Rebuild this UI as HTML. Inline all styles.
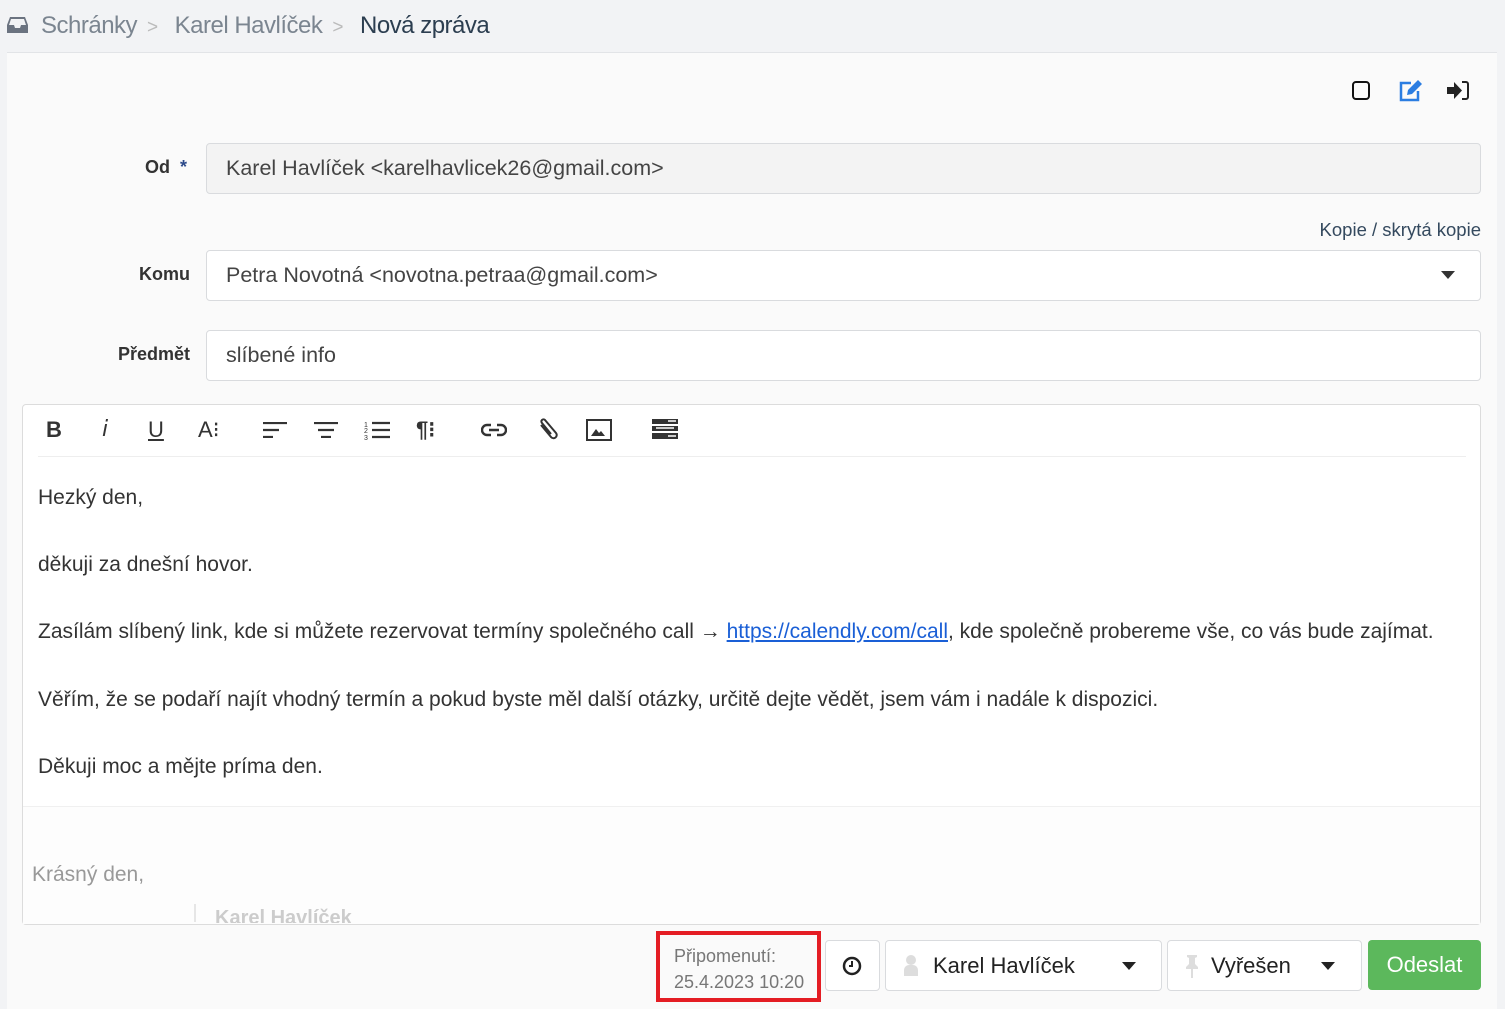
<!DOCTYPE html>
<html><head><meta charset="utf-8">
<style>
*{box-sizing:border-box;margin:0;padding:0}
body{width:1505px;height:1009px;overflow:hidden;background:#f2f3f5;font-family:"Liberation Sans",sans-serif;position:relative}
.a{position:absolute}
.card{left:7px;top:52px;width:1490px;height:957px;background:#fafafa;border-top:1px solid #e2e4e7}
.lbl{font-weight:bold;font-size:18px;color:#333;text-align:right;width:100px}
.inp{left:206px;width:1275px;height:51px;border:1px solid #d9dbde;border-radius:4px;background:#fff;font-size:21.5px;color:#444;padding:0 19px;line-height:49px}
.body{font-size:21px;color:#333}
.btn{border:1px solid #d9dbde;border-radius:4px;background:#fff;height:51px;top:940px}
</style></head><body>
<svg class="a" style="left:7px;top:15px" width="21" height="20" viewBox="0 0 21 20"><path d="M3 2h15l3 8v8H0v-8z" fill="#6b7380"/><path d="M4 4h13l2 6h-5l-1 3H8l-1-3H2z" fill="#f2f3f5"/></svg>
<div class="a" style="left:41px;top:12px;font-size:24px;letter-spacing:-0.5px;color:#7b8590;white-space:nowrap">Schránky<span style="color:#bbb;font-size:19px;margin:0 17px 0 10px">&gt;</span>Karel Havlíček<span style="color:#bbb;font-size:19px;margin:0 17px 0 10px">&gt;</span><span style="color:#2c3e50">Nová zpráva</span></div>
<div class="a card"></div>
<div class="a" style="left:1498px;top:52px;width:7px;height:957px;background:#f2f3f5"></div>
<div class="a" style="left:1352px;top:81px;width:18px;height:19px;border:2px solid #111;border-radius:4px"></div>
<svg class="a" style="left:1398px;top:79px" width="26" height="23" viewBox="0 0 26 23"><path d="M13 4H3v17h17v-9" fill="none" stroke="#2b7de1" stroke-width="2.5"/><path d="M20 1l4 4-10 10-5 1 1-5z" fill="#2b7de1"/></svg>
<svg class="a" style="left:1446px;top:80px" width="24" height="21" viewBox="0 0 24 21"><path d="M1 7h7V2l8 8.5-8 8.5v-5H1z" fill="#222"/><path d="M16 2h4a2 2 0 0 1 2 2v13a2 2 0 0 1-2 2h-4" fill="none" stroke="#222" stroke-width="2"/></svg>
<div class="a lbl" style="left:70px;top:157px">Od</div><div class="a" style="left:180px;top:157px;color:#2c4a8a;font-weight:bold;font-size:18px">*</div>
<div class="a inp" style="top:143px;background:#f3f3f3">Karel Havlíček &lt;karelhavlicek26@gmail.com&gt;</div>
<div class="a" style="right:24px;top:219px;font-size:18.5px;color:#34495e">Kopie / skrytá kopie</div>
<div class="a lbl" style="left:90px;top:264px">Komu</div>
<div class="a inp" style="top:250px">Petra Novotná &lt;novotna.petraa@gmail.com&gt;</div>
<div class="a" style="left:1441px;top:271px;border-left:7px solid transparent;border-right:7px solid transparent;border-top:8px solid #333"></div>
<div class="a lbl" style="left:90px;top:344px">Předmět</div>
<div class="a inp" style="top:330px">slíbené info</div>
<div class="a" style="left:22px;top:404px;width:1459px;height:521px;border:1px solid #dcdcdc;border-radius:4px;background:#fff"></div>
<div class="a" style="left:38px;top:456px;width:1428px;height:1px;background:#eee"></div>
<div class="a" style="left:23px;top:806px;width:1457px;height:1px;background:#f0f0f0"></div>
<div class="a" style="left:23px;top:807px;width:1457px;height:117px;background:#fdfdfd"></div>
<div class="a" style="top:417px;left:0;font-size:22px;color:#333">
<span class="a" style="left:46px;font-weight:bold">B</span>
<span class="a" style="left:102px;font-style:italic;font-family:'DejaVu Sans'">i</span>
<span class="a" style="left:148px;text-decoration:underline">U</span>
<span class="a" style="left:198px">A⁝</span>
<svg class="a" style="left:263px;top:5px" width="24" height="16"><path d="M0 1h24M0 8h16M0 15h10" stroke="#333" stroke-width="2.2"/></svg>
<svg class="a" style="left:314px;top:5px" width="24" height="16"><path d="M0 1h24M4 8h16M7 15h10" stroke="#333" stroke-width="2.2"/></svg>
<svg class="a" style="left:364px;top:3px" width="26" height="20"><path d="M8 3h18M8 10h18M8 17h18" stroke="#333" stroke-width="2.2"/><text x="0" y="7" font-size="7" fill="#333">1</text><text x="0" y="13" font-size="7" fill="#333">2</text><text x="0" y="20" font-size="7" fill="#333">3</text></svg>
<span class="a" style="left:416px;font-weight:bold">¶⁝</span>
<svg class="a" style="left:481px;top:5px" width="26" height="16"><path d="M10 3H6a5 5 0 0 0 0 10h4M16 3h4a5 5 0 0 1 0 10h-4M8 8h10" fill="none" stroke="#333" stroke-width="2.4"/></svg>
<svg class="a" style="left:536px;top:0px" width="24" height="26"><path d="M5 8l10 12a3 3 0 0 0 5-4L9 3a2 2 0 0 0-3 3l9 11" fill="none" stroke="#333" stroke-width="2"/></svg>
<svg class="a" style="left:586px;top:2px" width="26" height="22"><rect x="1" y="1" width="24" height="20" fill="none" stroke="#333" stroke-width="2"/><path d="M5 17l5-7 3 4 2-2 4 5z" fill="#333"/></svg>
<svg class="a" style="left:652px;top:2px" width="26" height="20"><rect width="26" height="5" fill="#333"/><rect y="7" width="26" height="5" fill="#333"/><rect y="14" width="26" height="6" fill="#333"/><path d="M16 2h8M4 9h18M16 17h8" stroke="#fff" stroke-width="1.5"/></svg>
</div>
<div class="a body" style="left:38px;top:486px">Hezký den,</div>
<div class="a body" style="left:38px;top:553px">děkuji za dnešní hovor.</div>
<div class="a body" style="left:38px;top:620px;white-space:nowrap">Zasílám slíbený link, kde si můžete rezervovat termíny společného call → <span style="color:#1a5fd6;text-decoration:underline">https://calendly.com/call</span>, kde společně probereme vše, co vás bude zajímat.</div>
<div class="a body" style="left:38px;top:688px;white-space:nowrap">Věřím, že se podaří najít vhodný termín a pokud byste měl další otázky, určitě dejte vědět, jsem vám i nadále k dispozici.</div>
<div class="a body" style="left:38px;top:755px">Děkuji moc a mějte príma den.</div>
<div class="a" style="left:32px;top:863px;font-size:21px;color:#999">Krásný den,</div>
<div class="a" style="left:194px;top:904px;width:2px;height:18px;background:#e6e6e6"></div>
<div class="a" style="left:215px;top:907px;height:16px;overflow:hidden;font-size:20px;font-weight:bold;color:#ccc">Karel Havlíček</div>
<div class="a" style="left:656px;top:931px;width:165px;height:71px;border:4px solid #e41d24"></div>
<div class="a" style="left:674px;top:943px;font-size:18px;color:#777;line-height:26px">Připomenutí:<br>25.4.2023 10:20</div>
<div class="a btn" style="left:825px;width:55px"></div>
<svg class="a" style="left:842px;top:956px" width="20" height="20"><circle cx="10" cy="10" r="8" fill="none" stroke="#222" stroke-width="2.5"/><path d="M10 5v5H7" fill="none" stroke="#222" stroke-width="2"/></svg>
<div class="a btn" style="left:885px;width:277px"></div>
<svg class="a" style="left:903px;top:954px" width="16" height="22"><circle cx="8" cy="6" r="5" fill="#ddd"/><path d="M1 22v-6a5 5 0 0 1 5-5h4a5 5 0 0 1 5 5v6z" fill="#ddd"/></svg>
<div class="a" style="left:933px;top:953px;font-size:22px;color:#222">Karel Havlíček</div>
<div class="a" style="left:1122px;top:962px;border-left:7px solid transparent;border-right:7px solid transparent;border-top:8px solid #222"></div>
<div class="a btn" style="left:1167px;width:195px"></div>
<svg class="a" style="left:1184px;top:954px" width="16" height="24"><path d="M3 1h10v2l-2 1v6l3 3v2H2v-2l3-3V4L3 3z" fill="#ddd"/><path d="M8 15v9" stroke="#ddd" stroke-width="2"/></svg>
<div class="a" style="left:1211px;top:953px;font-size:22px;color:#222">Vyřešen</div>
<div class="a" style="left:1321px;top:962px;border-left:7px solid transparent;border-right:7px solid transparent;border-top:8px solid #222"></div>
<div class="a" style="left:1368px;top:940px;width:113px;height:50px;background:#5cb85c;border-radius:4px;color:#fff;font-size:22px;text-align:center;line-height:50px">Odeslat</div>
</body></html>
